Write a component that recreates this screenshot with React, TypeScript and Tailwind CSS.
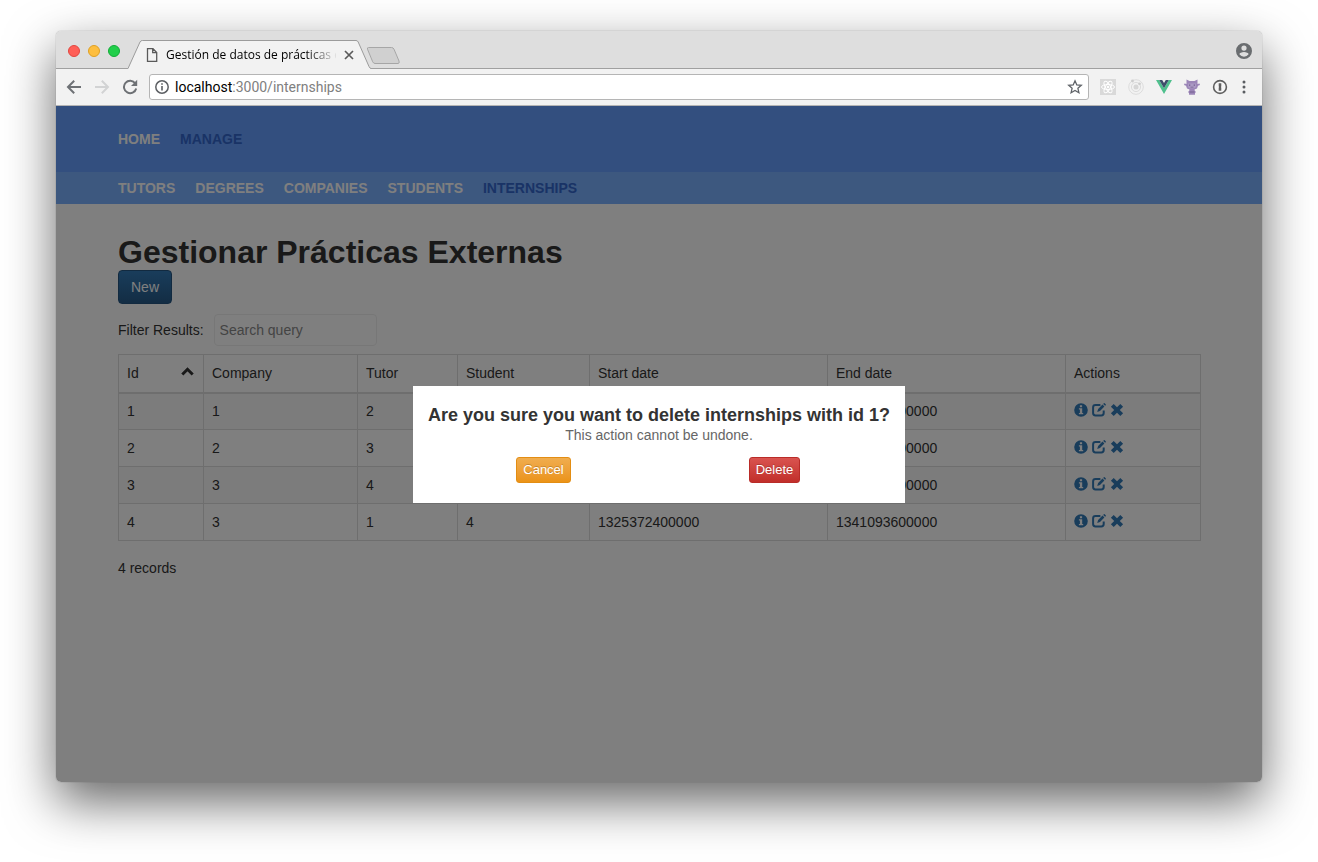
import React from "react";

const TEXT = "font-['Liberation_Sans',Arial,sans-serif]";

const mainLinks = [
  { label: "HOME", active: false },
  { label: "MANAGE", active: true },
];

const subLinks = [
  { label: "TUTORS", active: false },
  { label: "DEGREES", active: false },
  { label: "COMPANIES", active: false },
  { label: "STUDENTS", active: false },
  { label: "INTERNSHIPS", active: true },
];

const columns = [
  { label: "Id", width: "w-[85px]" },
  { label: "Company", width: "w-[154px]" },
  { label: "Tutor", width: "w-[100px]" },
  { label: "Student", width: "w-[132px]" },
  { label: "Start date", width: "w-[238px]" },
  { label: "End date", width: "w-[238px]" },
  { label: "Actions", width: "w-[135px]" },
];

const rows = [
  ["1", "1", "2", "1", "1325372400000", "1341093600000"],
  ["2", "2", "3", "2", "1325372400000", "1341093600000"],
  ["3", "3", "4", "3", "1325372400000", "1341093600000"],
  ["4", "3", "1", "4", "1325372400000", "1341093600000"],
];

function InfoSign() {
  return (
    <svg viewBox="0 0 14 14" className="size-3.5" aria-hidden="true">
      <path
        fill="currentColor"
        fillRule="evenodd"
        d="M7 .2a6.800 6.800 0 1 1 0 13.600A6.800 6.800 0 0 1 7 .2ZM5.900 2.200v2h2.200v-2ZM4.900 5.300v1.300h1v3.300h-1v1.300h4.300V9.900h-1V5.300Z"
      />
    </svg>
  );
}

function EditSign() {
  return (
    <svg viewBox="0 0 14 14" className="size-3.5" aria-hidden="true">
      <path
        d="M8.400 2H3.500A2.400 2.400 0 0 0 1.100 4.400v5.700a2.400 2.400 0 0 0 2.400 2.400H9.300a2.400 2.400 0 0 0 2.400-2.400V7.600"
        fill="none"
        stroke="currentColor"
        strokeWidth="2"
      />
      <path d="M10.500 1.600 12.400 3.500 8 8 5.200 8.900 6.100 6.100ZM11.200.9l.6-.6q.4-.4.900 0l1 1q.4.5 0 .9l-.6.6Z" fill="currentColor" />
    </svg>
  );
}

function RemoveSign() {
  return (
    <svg viewBox="0 0 14 14" className="size-3.5" aria-hidden="true">
      <path
        d="M3.700.9 7 4.200 10.300.9 13.100 3.700 9.800 7l3.300 3.300-2.800 2.800L7 9.800l-3.300 3.300L.9 10.300 4.200 7 .9 3.700Z"
        fill="currentColor"
      />
    </svg>
  );
}

function TitleBar() {
  return (
    <div className="flex h-[38px] items-end border-b border-[#a0a0a0] bg-[#dedede]">
      <div className="flex shrink-0 gap-2 self-center pt-0.5 pl-3">
        <button aria-label="Close window" className="size-3 rounded-full border border-[#e2463f] bg-[#ff5f57]" />
        <button aria-label="Minimize window" className="size-3 rounded-full border border-[#dfa023] bg-[#fdbe3f]" />
        <button aria-label="Zoom window" className="size-3 rounded-full border border-[#12ac38] bg-[#22cf4b]" />
      </div>
      <div className="relative -mb-px ml-2 flex h-[29px] w-[243px] shrink-0 items-center">
        <svg viewBox="0 0 243 29" className="absolute inset-0 h-full w-full" aria-hidden="true">
          <path d="M0 28.500 12 2Q12.800.5 14.300.5H228Q229.500.5 230.200 2L241 26.500Q242 28.500 243 28.500V29H0Z" fill="#f2f2f2" />
          <path d="M0 28.500 12 2Q12.800.5 14.300.5H228Q229.500.5 230.200 2L241 26.500Q242 28.500 243 28.500" fill="none" stroke="#9b9b9b" />
        </svg>
        <svg viewBox="0 0 12 14" className="relative ml-[18px] h-3.5 w-3 shrink-0" aria-hidden="true">
          <path d="M1.500.7H7L10.700 4.500V13.300H1.500ZM6.700.7V4.700H10.700" fill="none" stroke="#5a5a5a" strokeWidth="1.300" />
        </svg>
        <div className="relative ml-2 w-[170px] shrink-0 overflow-hidden text-[12px] whitespace-nowrap text-black [mask-image:linear-gradient(to_right,black_140px,transparent_172px)] font-['Open_Sans','Noto_Sans',sans-serif]">
          Gestión de datos de prácticas externas
        </div>
        <button aria-label="Close tab" className="relative ml-2 text-[#5a5a5a]">
          <svg viewBox="0 0 10 10" className="size-2.5" aria-hidden="true">
            <path d="M1 1 9 9M9 1 1 9" stroke="currentColor" strokeWidth="1.700" />
          </svg>
        </button>
      </div>
      <button aria-label="New tab" className="mb-1 -ml-1 shrink-0">
        <svg viewBox="0 0 34 17" className="h-[17px] w-[34px]" aria-hidden="true">
          <path d="M1.500.5H24.500Q26.300.5 27 2.200L32 14Q32.800 16.500 31 16.500H8Q6.500 16.500 5.700 14.800L.5 2.200Q0 .5 1.500.5Z" fill="#d0d0d0" stroke="#a6a6a6" />
        </svg>
      </button>
      <button aria-label="Profile" className="mr-2.5 ml-auto self-center pt-0.5 text-[#6a6d70]">
        <svg viewBox="0 0 16 16" className="size-4" aria-hidden="true">
          <path fill="currentColor" fillRule="evenodd" d="M8 0a8 8 0 1 1 0 16A8 8 0 0 1 8 0Zm0 2.500a2.600 2.600 0 1 0 0 5.200 2.600 2.600 0 0 0 0-5.200Zm0 6.600c-2.200 0-4.600 1-4.600 2.200a5.600 5.600 0 0 0 9.200 0c0-1.200-2.400-2.200-4.600-2.200Z" />
        </svg>
      </button>
    </div>
  );
}

function Toolbar() {
  return (
    <div className="flex h-[37px] items-center border-b border-[#b4b4b4] bg-[#f2f2f2] pr-3.5 pl-2.5 text-[#6e7175]">
      <button aria-label="Back">
        <svg viewBox="0 0 16 16" className="size-4" aria-hidden="true">
          <path d="M15 8H2M8.200 1.800 2 8l6.200 6.200" fill="none" stroke="currentColor" strokeWidth="2" />
        </svg>
      </button>
      <button aria-label="Forward" className="ml-3 text-[#d2d3d4]">
        <svg viewBox="0 0 16 16" className="size-4" aria-hidden="true">
          <path d="M1 8h13M7.800 1.800 14 8l-6.200 6.200" fill="none" stroke="currentColor" strokeWidth="2" />
        </svg>
      </button>
      <button aria-label="Reload" className="ml-3">
        <svg viewBox="0 0 16 16" className="size-4" aria-hidden="true">
          <path d="M13.300 4.500A6.200 6.200 0 1 0 14.200 9.500" fill="none" stroke="currentColor" strokeWidth="2" />
          <path d="M15.200.8V7H9Z" fill="currentColor" />
        </svg>
      </button>
      <div className="ml-[11px] flex h-[26px] min-w-0 flex-1 items-center rounded-[3px] border border-[#b5b5b5] bg-white px-[5px]">
        <svg viewBox="0 0 14 14" className="size-3.5 shrink-0" aria-hidden="true">
          <circle cx="7" cy="7" r="6.200" fill="none" stroke="#5c5f63" strokeWidth="1.500" />
          <path d="M7 6v4.500M7 3.300v1.500" stroke="#5c5f63" strokeWidth="1.600" />
        </svg>
        <a href="#address" className="ml-1.5 flex-1 text-[14px] text-[#808080] font-[Roboto,sans-serif]">
          <span className="text-black">localhost</span>:3000/internships
        </a>
        <button aria-label="Bookmark this page">
          <svg viewBox="0 0 16 16" className="size-4" aria-hidden="true">
            <path d="m8 1.800 1.800 4.100 4.500.4-3.400 3 1 4.400L8 11.400l-3.900 2.300 1-4.400-3.400-3 4.500-.4Z" fill="none" stroke="#5f6368" strokeWidth="1.300" />
          </svg>
        </button>
      </div>
      <div className="ml-[11px] flex items-center gap-3">
        <button aria-label="React tools">
          <svg viewBox="0 0 16 16" className="size-4" aria-hidden="true">
            <rect width="16" height="16" fill="#d9d9d9" />
            <g fill="none" stroke="#fff">
              <ellipse cx="8" cy="8" rx="6.500" ry="2.500" />
              <ellipse cx="8" cy="8" rx="6.500" ry="2.500" transform="rotate(60 8 8)" />
              <ellipse cx="8" cy="8" rx="6.500" ry="2.500" transform="rotate(120 8 8)" />
            </g>
            <circle cx="8" cy="8" r="1.200" fill="#fff" />
          </svg>
        </button>
        <button aria-label="Redux tools">
          <svg viewBox="0 0 16 16" className="size-4" aria-hidden="true">
            <g fill="none" stroke="#dcdcdc">
              <circle cx="8" cy="8" r="7.300" />
              <circle cx="8" cy="8" r="4.600" />
            </g>
            <circle cx="8" cy="8" r="2.500" fill="#d6d6d6" />
            <circle cx="4.500" cy="2" r="1.400" fill="#cdcdcd" />
            <circle cx="11.500" cy="4.800" r="1.400" fill="#cdcdcd" />
          </svg>
        </button>
        <button aria-label="Vue tools">
          <svg viewBox="0 0 16 16" className="size-4" aria-hidden="true">
            <path d="M0 1h3.200L8 9.300 12.800 1H16L8 15Z" fill="#4fc08d" />
            <path d="M3.200 1h3L8 4.100 9.800 1h3L8 9.300Z" fill="#3f4f6b" />
          </svg>
        </button>
        <button aria-label="Octocat tools">
          <svg viewBox="0 0 16 16" className="size-4" aria-hidden="true">
            <path d="M2.500.5 5.500 2h5l3-1.500V5L15.500 4.500 16 6 14 6.800 13 9.500 10.500 10.500 11 12.500H12V13.500H11V15.800H5V13.500H4V12.500H5L5.500 10.500 3 9.500 2 6.800 0 6 .5 4.500 2.500 5Z" fill="#9c86b8" />
            <path d="M4 4.500H12V8L10.500 9.200H5.500L4 8Z" fill="#ab9ac4" />
            <path d="M5 5.500h1.300v1.300H5ZM9.700 5.500H11v1.300H9.700ZM6.500 7.800h3v.8h-3ZM5.500 12.500h5V13.500h-5Z" fill="#75608f" />
          </svg>
        </button>
        <button aria-label="Password manager">
          <svg viewBox="0 0 16 16" className="size-4" aria-hidden="true">
            <circle cx="8" cy="8" r="6.400" fill="#f5f5f5" stroke="#5f5f5f" strokeWidth="1.600" />
            <path d="M6.700 4.300h2.600v3.100l-.5.600.5.600v3.100H6.700V8.600l.5-.6-.5-.6Z" fill="#5f5f5f" />
          </svg>
        </button>
        <button aria-label="Browser menu" className="flex w-2 justify-center">
          <svg viewBox="0 0 4 14" className="h-3.5 w-1" aria-hidden="true">
            <g fill="#5a5d61">
              <circle cx="2" cy="2" r="1.500" />
              <circle cx="2" cy="7" r="1.500" />
              <circle cx="2" cy="12" r="1.500" />
            </g>
          </svg>
        </button>
      </div>
    </div>
  );
}

function NavLinks({ items }: { items: { label: string; active: boolean }[] }) {
  return (
    <ul className="flex gap-5 text-[14px] leading-5 font-bold">
      {items.map((item) => (
        <li key={item.label}>
          <a href={"#" + item.label.toLowerCase()} className={item.active ? "text-[#3366cc]" : "text-white"}>
            {item.label}
          </a>
        </li>
      ))}
    </ul>
  );
}

function InternshipTable() {
  return (
    <table className="mt-2 w-full table-fixed border-collapse border border-[#ddd] text-left">
      <thead>
        <tr className="h-[38px]">
          {columns.map((column, index) => (
            <th key={column.label} className={column.width + " border border-b-2 border-[#ddd] px-2 py-0 font-normal"}>
              <div className="flex items-center justify-between">
                {column.label}
                {index === 0 && (
                  <button aria-label="Sort by id">
                    <svg viewBox="0 0 14 14" className="size-3.5" aria-hidden="true">
                      <path d="m1.300 8.500L6.500 3.300l5.200 5.200" fill="none" stroke="currentColor" strokeWidth="3" />
                    </svg>
                  </button>
                )}
              </div>
            </th>
          ))}
        </tr>
      </thead>
      <tbody>
        {rows.map((row) => (
          <tr key={row[0]} className="h-[37px] odd:bg-[#f9f9f9]">
            {row.map((cell, index) => (
              <td key={index} className="border border-[#ddd] px-2 py-0">
                {cell}
              </td>
            ))}
            <td className="border border-[#ddd] px-2 pt-0 pb-0.5">
              <div className="flex items-center gap-1 text-[#337ab7]">
                <a href="#info" aria-label={"Show internship " + row[0]}>
                  <InfoSign />
                </a>
                <a href="#edit" aria-label={"Edit internship " + row[0]}>
                  <EditSign />
                </a>
                <a href="#delete" aria-label={"Delete internship " + row[0]}>
                  <RemoveSign />
                </a>
              </div>
            </td>
          </tr>
        ))}
      </tbody>
    </table>
  );
}

function DeleteDialog() {
  return (
    <div className="absolute inset-0 flex items-center justify-center bg-black/50">
      <div role="dialog" aria-modal="true" aria-labelledby="dialog-title" className="w-[492px] bg-white px-[15px] pt-[19px] pb-5 text-center">
        <h2 id="dialog-title" className="text-[18px] leading-5 font-bold whitespace-nowrap">
          Are you sure you want to delete internships with id 1?
        </h2>
        <p className="text-[14px] leading-5 text-[#666]">This action cannot be undone.</p>
        <div className="mt-3 grid grid-cols-2 text-[13px] leading-5 text-white">
          <div>
            <button className="rounded-[3px] border border-[#e38d13] bg-linear-to-b from-[#f0ad4e] to-[#eb9316] px-1.5 py-0.5 [text-shadow:0_-1px_0_rgba(0,0,0,0.2)]">
              Cancel
            </button>
          </div>
          <div>
            <button className="rounded-[3px] border border-[#b92c28] bg-linear-to-b from-[#d9534f] to-[#c12e2a] px-1.5 py-0.5 [text-shadow:0_-1px_0_rgba(0,0,0,0.2)]">
              Delete
            </button>
          </div>
        </div>
      </div>
    </div>
  );
}

export default function App() {
  return (
    <div className="flex min-h-screen flex-col bg-white px-14 pt-[31px] pb-20">
      <div className="flex flex-1 flex-col overflow-hidden rounded-[5px] shadow-[0_0_1px_rgba(0,0,0,0.5),0_20px_50px_rgba(0,0,0,0.6)]">
        <TitleBar />
        <Toolbar />
        <div className={"relative flex-1 bg-white text-[14px] leading-5 text-[#333] " + TEXT}>
          <nav aria-label="Main" className="flex h-[66px] items-center bg-[#669fff] px-[62px]">
            <NavLinks items={mainLinks} />
          </nav>
          <nav aria-label="Manage" className="flex h-8 items-center bg-[#7ab0ff] px-[62px]">
            <NavLinks items={subLinks} />
          </nav>
          <main className="px-[62px] pt-[30px]">
            <h1 className="text-[32px] leading-9 font-bold">Gestionar Prácticas Externas</h1>
            <button className="block rounded-[4px] border border-[#245580] bg-linear-to-b from-[#337ab7] to-[#265a88] px-3 py-1.5 text-white">
              New
            </button>
            <div className="mt-2.5 flex items-center gap-2.5">
              <label htmlFor="filter">Filter Results:</label>
              <input
                id="filter"
                type="text"
                placeholder="Search query"
                className="h-8 w-[163px] rounded-[4px] border border-[#eee] bg-white px-[5px] placeholder:text-[#888]"
              />
            </div>
            <InternshipTable />
            <p className="mt-[17px]">4 records</p>
          </main>
          <DeleteDialog />
        </div>
      </div>
    </div>
  );
}
